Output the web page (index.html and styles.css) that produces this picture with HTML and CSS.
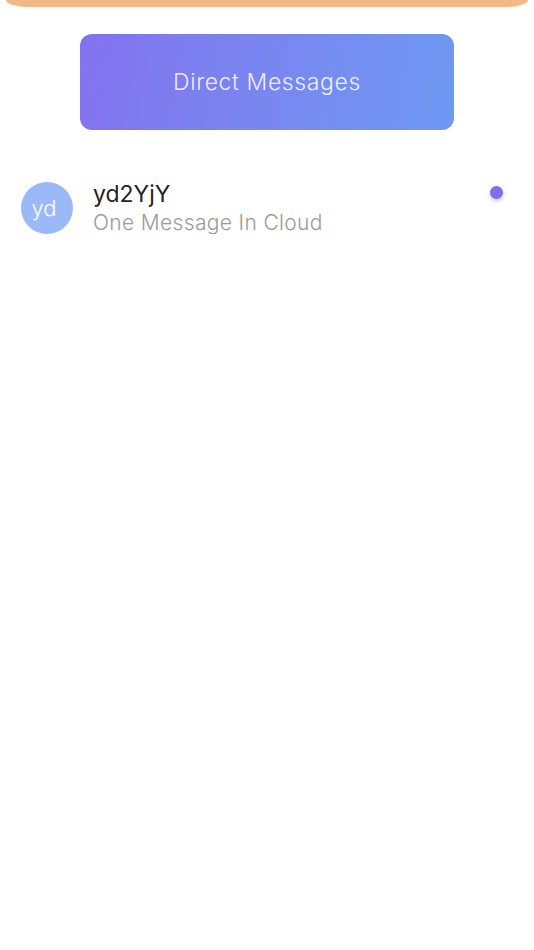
FILE: index.html
```html
<!DOCTYPE html>
<html lang="en">
  <head>
    <meta charset="UTF-8" />
    <meta name="viewport" content="width=device-width, initial-scale=1.0" />
    <title>Direct Messages</title>
    <link rel="stylesheet" href="styles.css">
  </head>
  <body>
    <div class="header-edge"></div>

    <div class="page">
      <button class="dm-btn">Direct Messages</button>

      <ul class="chat-list">
        <li class="chat-item">
          <div class="avatar">yd</div>
          <div class="chat-info">
            <div class="chat-name">yd2YjY</div>
            <div class="chat-sub">One Message In Cloud</div>
          </div>
          <span class="unread-dot"></span>
        </li>
      </ul>
    </div>
  </body>
</html>
```

FILE: styles.css
```css
html,
body {
  margin: 0;
  background: #fff;
  font-family: Inter, "Noto Sans", sans-serif;
}

.header-edge {
  height: 7px;
  margin: 0 6px;
  background: #f2b985;
  border-radius: 0 0 22px 22px / 0 0 7px 7px;
}

.page {
  display: flex;
  flex-direction: column;
  align-items: center;
}

.dm-btn {
  margin-top: 27px;
  width: 374px;
  height: 96px;
  border: none;
  border-radius: 12px;
  background: linear-gradient(100deg, #8372ef 0%, #7a85f0 45%, #6e98f2 100%);
  color: rgba(255, 255, 255, 0.88);
  font-family: Inter, "Noto Sans", sans-serif;
  font-size: 23px;
  font-weight: 300;
  letter-spacing: 0.6px;
  cursor: pointer;
}

.chat-list {
  list-style: none;
  margin: 0;
  padding: 0;
  width: 100%;
  margin-top: 49px;
}

.chat-item {
  display: flex;
  align-items: center;
  padding: 0 21px;
  position: relative;
}

.avatar {
  width: 52px;
  height: 52px;
  border-radius: 50%;
  background: #9bb9f6;
  color: #fff;
  font-size: 22px;
  font-weight: 300;
  display: flex;
  justify-content: center;
  align-items: center;
  flex-shrink: 0;
  padding-right: 6px;
  box-sizing: border-box;
}

.chat-info {
  margin-left: 20px;
  display: flex;
  flex-direction: column;
}

.chat-name {
  font-size: 23px;
  color: #222;
  line-height: 30px;
}

.chat-sub {
  font-size: 21px;
  font-weight: 300;
  color: #9a9a9a;
  line-height: 28px;
  letter-spacing: 0.35px;
}

.unread-dot {
  position: absolute;
  right: 31px;
  top: 7px;
  width: 13px;
  height: 13px;
  border-radius: 50%;
  background: #7f6ee9;
  box-shadow: 0 2px 4px rgba(90, 70, 200, 0.35);
}
```
